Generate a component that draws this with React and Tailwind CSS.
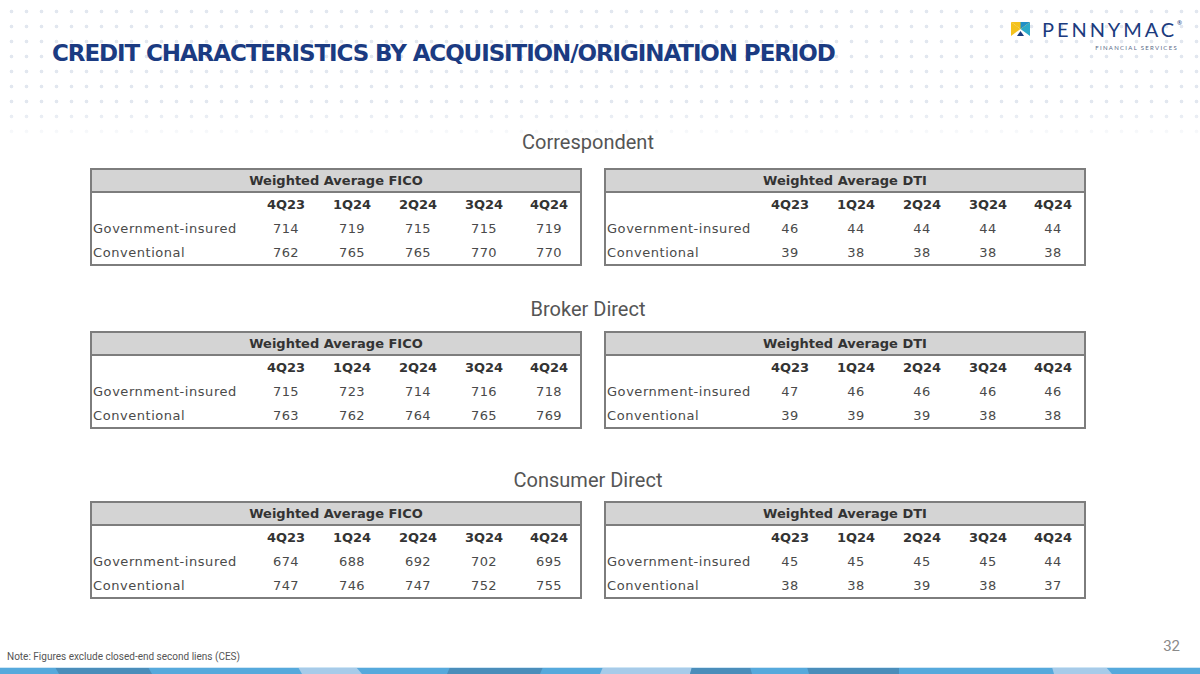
const QUARTERS = ['4Q23', '1Q24', '2Q24', '3Q24', '4Q24']

const SECTIONS = [
  {
    title: 'Correspondent',
    head: 'mt-[130px]',
    gap: 'mt-[14px]',
    fico: { gov: [714, 719, 715, 715, 719], conv: [762, 765, 765, 770, 770] },
    dti: { gov: [46, 44, 44, 44, 44], conv: [39, 38, 38, 38, 38] },
  },
  {
    title: 'Broker Direct',
    head: 'mt-[31px]',
    gap: 'mt-[10px]',
    fico: { gov: [715, 723, 714, 716, 718], conv: [763, 762, 764, 765, 769] },
    dti: { gov: [47, 46, 46, 46, 46], conv: [39, 39, 39, 38, 38] },
  },
  {
    title: 'Consumer Direct',
    head: 'mt-[39px]',
    gap: 'mt-[9px]',
    fico: { gov: [674, 688, 692, 702, 695], conv: [747, 746, 747, 752, 755] },
    dti: { gov: [45, 45, 45, 45, 44], conv: [38, 38, 39, 38, 37] },
  },
]

const BODY_FONT = { fontFamily: '"DejaVu Sans", sans-serif' }

function Logo() {
  return (
    <div className="flex flex-col items-end">
      <div className="flex items-center gap-[12px]">
        <svg width="19" height="14" viewBox="0 0 19 14">
          <polygon points="0,0 9.5,7 0,14" fill="#f4c21d" />
          <polygon points="19,0 9.5,7 19,14" fill="#2aa9c9" />
          <polygon points="0,0 19,0 9.5,7" fill="#f4c21d" />
          <polygon points="9.5,0 19,0 9.5,7" fill="#1f8fc8" />
          <polygon points="6,14 9.5,9 13,14" fill="#1b3b7e" />
        </svg>
        <span
          className="text-[20px] leading-none tracking-[2.9px] text-[#1b3b7e]"
          style={{ fontFamily: 'Lato, sans-serif' }}
        >
          PENNYMAC
        </span>
        <span className="-ml-[12px] -mt-[12px] text-[6px] text-[#1b3b7e]">®</span>
      </div>
      <span
        className="mr-[4px] mt-[6px] text-[6px] leading-none tracking-[1.3px] text-[#5a6a88]"
        style={{ fontFamily: 'Lato, sans-serif' }}
      >
        FINANCIAL SERVICES
      </span>
    </div>
  )
}

function DataTable({ title, rows, labelW }) {
  const cols = labelW === 'wide' ? 'grid-cols-[161px_repeat(4,66px)_64px]' : 'grid-cols-[151px_repeat(4,66px)_64px]'
  return (
    <div className="border-2 border-[#7d7d7d] text-[13px] text-[#4a4a4a]" style={BODY_FONT}>
      <div className="flex h-[23px] items-center justify-center border-b-2 border-[#7d7d7d] bg-[#d4d4d4] font-bold text-[#333]">
        {title}
      </div>
      <div className={`grid ${cols}`}>
        <div className="h-[24px]" />
        {QUARTERS.map((q) => (
          <div key={q} className="flex h-[24px] items-center justify-center font-bold text-[#333]">
            {q}
          </div>
        ))}
        <div className="flex h-[24px] items-center pl-[1px] tracking-[0.55px]">Government-insured</div>
        {rows.gov.map((v, i) => (
          <div key={'g' + i} className="flex h-[24px] items-center justify-center tracking-[0.4px]">
            {v}
          </div>
        ))}
        <div className="flex h-[23px] items-center pl-[1px] tracking-[0.55px]">Conventional</div>
        {rows.conv.map((v, i) => (
          <div key={'c' + i} className="flex h-[23px] items-center justify-center tracking-[0.4px]">
            {v}
          </div>
        ))}
      </div>
    </div>
  )
}

function BottomBar() {
  return (
    <svg width="1200" height="7" viewBox="0 0 1200 7" className="block">
      <rect width="1200" height="7" fill="#56a9dc" />
      <polygon points="55,0 148,0 152,7 59,7" fill="#4b8dba" />
      <polygon points="298,0 356,0 362,7 302,7" fill="#a7cbe9" />
      <polygon points="450,0 543,0 540,7 447,7" fill="#4b8dba" />
      <polygon points="603,0 692,0 690,7 600,7" fill="#a7cbe9" />
      <polygon points="692,0 750,0 752,7 690,7" fill="#4b8dba" />
      <polygon points="807,0 899,0 899,7 809,7" fill="#4b8dba" />
      <polygon points="1052,0 1106,0 1112,7 1054,7" fill="#a7cbe9" />
      <rect width="1200" height="1" fill="#cfe6f5" />
    </svg>
  )
}

export default function App() {
  return (
    <div className="relative flex h-[674px] w-[1200px] flex-col overflow-hidden bg-white">
      {/* dotted backdrop behind the header */}
      <div
        className="absolute left-0 top-0 h-[142px] w-full bg-[radial-gradient(circle,#e2e7ef_1.7px,transparent_2.1px)] bg-[length:15px_15px] bg-[position:4px_4px]"
        style={{ maskImage: 'linear-gradient(to bottom, black 75%, transparent)' }}
      />

      <div className="relative flex h-0 items-start justify-between">
        <h1
          className="ml-[52px] mt-[42px] whitespace-nowrap text-[23px] font-bold leading-none tracking-[-1.1px] text-[#1b3b82]"
          style={{ fontFamily: '"DejaVu Sans", sans-serif' }}
        >
          CREDIT CHARACTERISTICS BY ACQUISITION/ORIGINATION PERIOD
        </h1>
        <div className="mr-[18px] mt-[19px]">
          <Logo />
        </div>
      </div>

      <div className="relative ml-[90px] flex w-[996px] flex-col">
        {SECTIONS.map((s) => (
          <div key={s.title} className="flex flex-col">
            <div
              className={`${s.head} h-[24px] text-center text-[20px] leading-[24px] text-[#555]`}
              style={{ fontFamily: 'Roboto, sans-serif' }}
            >
              {s.title}
            </div>
            <div className={`${s.gap} flex justify-between`}>
              <div className="w-[492px]">
                <DataTable title="Weighted Average FICO" rows={s.fico} labelW="wide" />
              </div>
              <div className="w-[482px]">
                <DataTable title="Weighted Average DTI" rows={s.dti} labelW="narrow" />
              </div>
            </div>
          </div>
        ))}
      </div>

      <div className="mt-auto flex items-end justify-between" style={{ fontFamily: 'Roboto, sans-serif' }}>
        <span className="mb-[3px] ml-[7px] text-[10px] text-[#555]">
          Note: Figures exclude closed-end second liens (CES)
        </span>
        <span className="mb-[10px] mr-[20px] text-[15px] text-[#8a8a8a]">32</span>
      </div>
      <BottomBar />
    </div>
  )
}
